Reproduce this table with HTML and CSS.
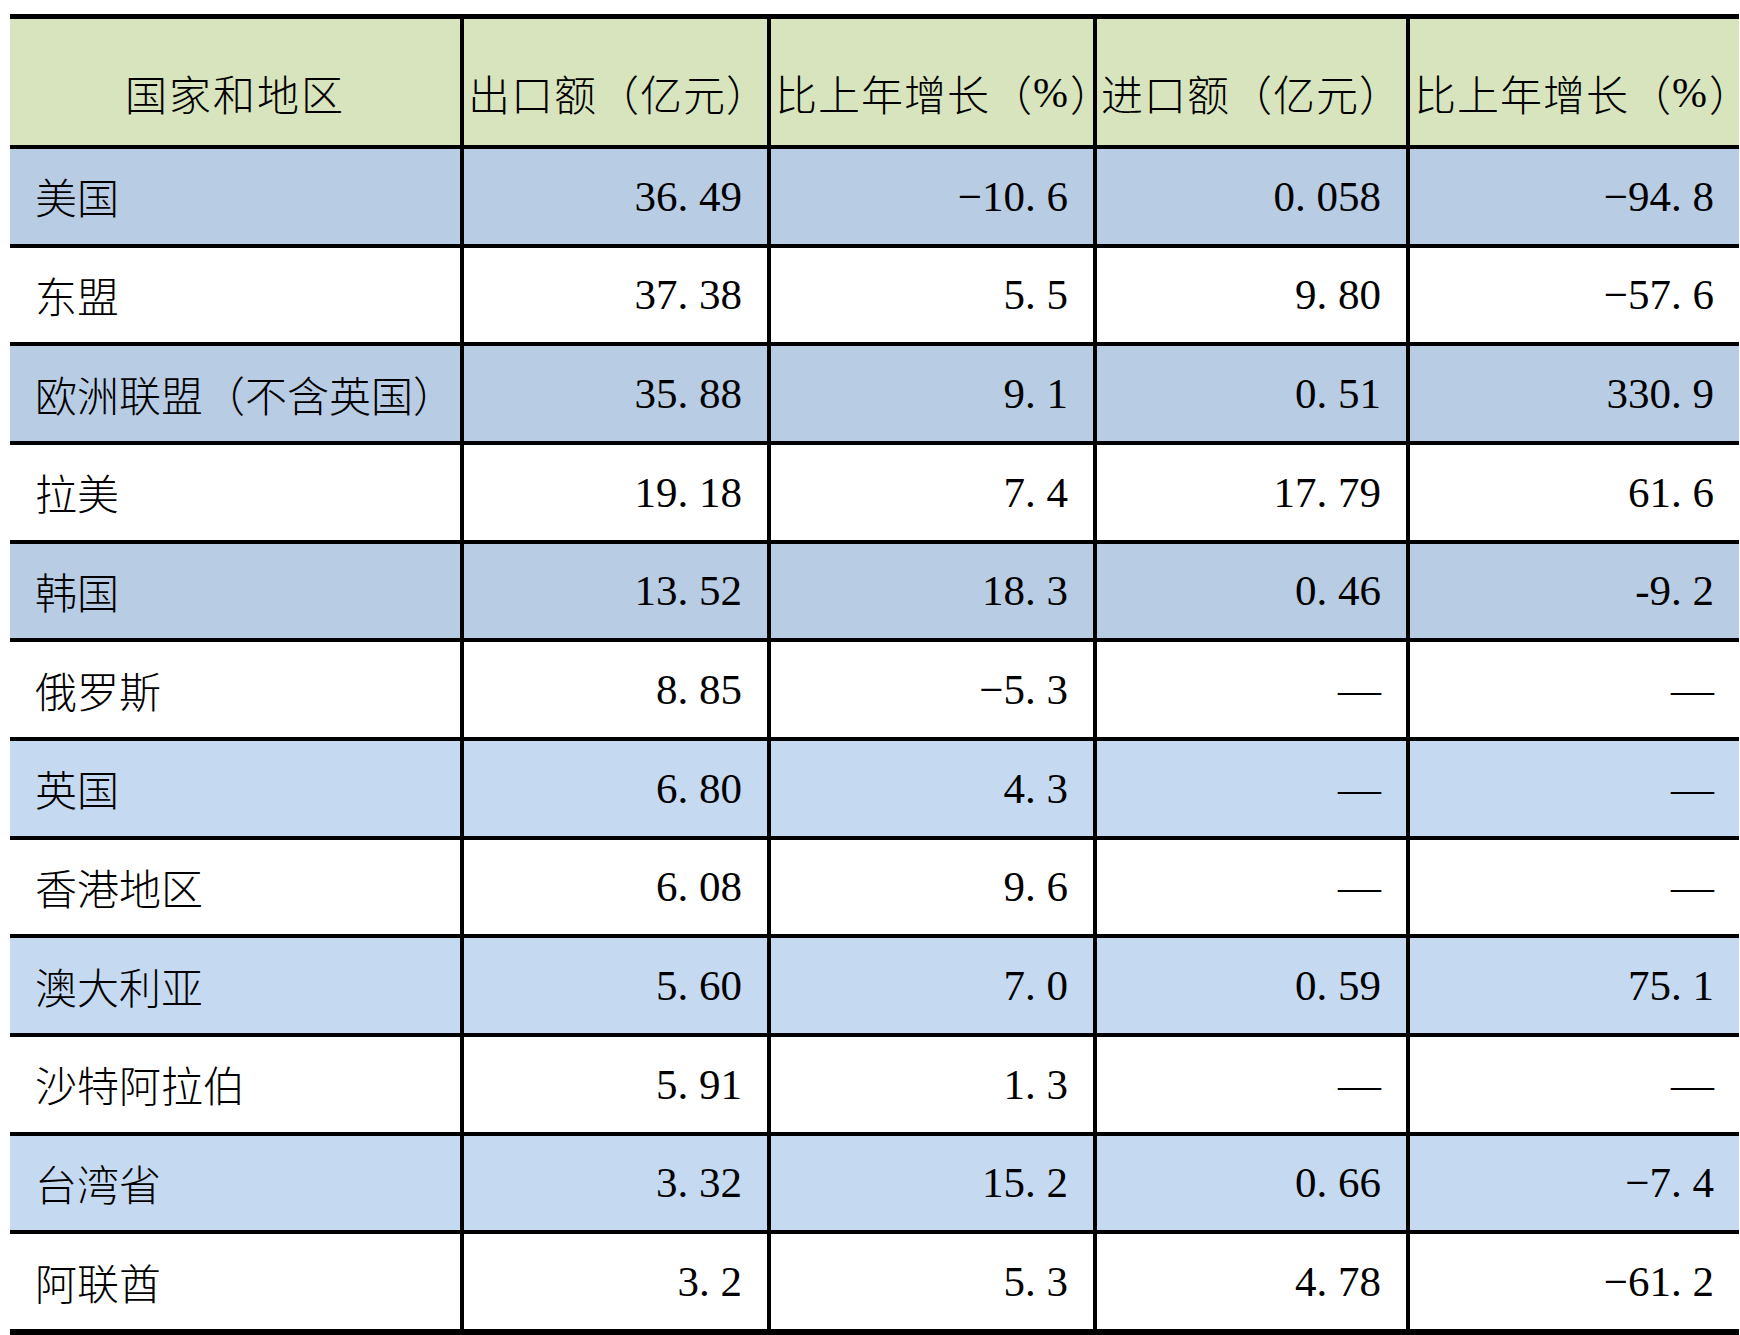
FILE: index.html
```html
<!DOCTYPE html>
<html lang="zh-CN">
<head>
<meta charset="utf-8">
<title>国家和地区进出口</title>
<link rel="stylesheet" href="styles.css">
</head>
<body>
<div class="sheet" role="table">
  <div class="row head" role="row">
    <div class="cell name" role="columnheader">国家和地区</div>
    <div class="cell" role="columnheader">出口额（亿元<span class="cp">）</span></div>
    <div class="cell" role="columnheader">比上年增长（<span class="pct">%</span><span class="cp">）</span></div>
    <div class="cell" role="columnheader">进口额（亿元<span class="cp">）</span></div>
    <div class="cell" role="columnheader">比上年增长（<span class="pct">%</span><span class="cp">）</span></div>
  </div>
  <div class="row dark" role="row">
    <div class="cell name">美国</div>
    <div class="cell num">36<span class="dot">.</span>49</div>
    <div class="cell num">−10<span class="dot">.</span>6</div>
    <div class="cell num">0<span class="dot">.</span>058</div>
    <div class="cell num">−94<span class="dot">.</span>8</div>
  </div>
  <div class="row" role="row">
    <div class="cell name">东盟</div>
    <div class="cell num">37<span class="dot">.</span>38</div>
    <div class="cell num">5<span class="dot">.</span>5</div>
    <div class="cell num">9<span class="dot">.</span>80</div>
    <div class="cell num">−57<span class="dot">.</span>6</div>
  </div>
  <div class="row dark" role="row">
    <div class="cell name">欧洲联盟（不含英国）</div>
    <div class="cell num">35<span class="dot">.</span>88</div>
    <div class="cell num">9<span class="dot">.</span>1</div>
    <div class="cell num">0<span class="dot">.</span>51</div>
    <div class="cell num">330<span class="dot">.</span>9</div>
  </div>
  <div class="row" role="row">
    <div class="cell name">拉美</div>
    <div class="cell num">19<span class="dot">.</span>18</div>
    <div class="cell num">7<span class="dot">.</span>4</div>
    <div class="cell num">17<span class="dot">.</span>79</div>
    <div class="cell num">61<span class="dot">.</span>6</div>
  </div>
  <div class="row dark" role="row">
    <div class="cell name">韩国</div>
    <div class="cell num">13<span class="dot">.</span>52</div>
    <div class="cell num">18<span class="dot">.</span>3</div>
    <div class="cell num">0<span class="dot">.</span>46</div>
    <div class="cell num">-9<span class="dot">.</span>2</div>
  </div>
  <div class="row" role="row">
    <div class="cell name">俄罗斯</div>
    <div class="cell num">8<span class="dot">.</span>85</div>
    <div class="cell num">−5<span class="dot">.</span>3</div>
    <div class="cell num">—</div>
    <div class="cell num">—</div>
  </div>
  <div class="row light" role="row">
    <div class="cell name">英国</div>
    <div class="cell num">6<span class="dot">.</span>80</div>
    <div class="cell num">4<span class="dot">.</span>3</div>
    <div class="cell num">—</div>
    <div class="cell num">—</div>
  </div>
  <div class="row" role="row">
    <div class="cell name">香港地区</div>
    <div class="cell num">6<span class="dot">.</span>08</div>
    <div class="cell num">9<span class="dot">.</span>6</div>
    <div class="cell num">—</div>
    <div class="cell num">—</div>
  </div>
  <div class="row light" role="row">
    <div class="cell name">澳大利亚</div>
    <div class="cell num">5<span class="dot">.</span>60</div>
    <div class="cell num">7<span class="dot">.</span>0</div>
    <div class="cell num">0<span class="dot">.</span>59</div>
    <div class="cell num">75<span class="dot">.</span>1</div>
  </div>
  <div class="row" role="row">
    <div class="cell name">沙特阿拉伯</div>
    <div class="cell num">5<span class="dot">.</span>91</div>
    <div class="cell num">1<span class="dot">.</span>3</div>
    <div class="cell num">—</div>
    <div class="cell num">—</div>
  </div>
  <div class="row light" role="row">
    <div class="cell name">台湾省</div>
    <div class="cell num">3<span class="dot">.</span>32</div>
    <div class="cell num">15<span class="dot">.</span>2</div>
    <div class="cell num">0<span class="dot">.</span>66</div>
    <div class="cell num">−7<span class="dot">.</span>4</div>
  </div>
  <div class="row" role="row">
    <div class="cell name">阿联酋</div>
    <div class="cell num">3<span class="dot">.</span>2</div>
    <div class="cell num">5<span class="dot">.</span>3</div>
    <div class="cell num">4<span class="dot">.</span>78</div>
    <div class="cell num">−61<span class="dot">.</span>2</div>
  </div>
</div>
</body>
</html>
```

FILE: styles.css
```css
html, body {
  margin: 0;
  padding: 0;
  background: #ffffff;
}

body {
  padding: 14px 0 0 10px;
  font-family: "Liberation Serif", "Noto Sans CJK SC", serif;
  color: #000000;
}

.sheet {
  display: grid;
  width: 1729px;
  grid-template-columns: 450px 303px 322px 309px 329px;
  grid-template-rows: 126px repeat(12, 94.67px);
  column-gap: 4px;
  row-gap: 4px;
  padding: 5px 0 6px 0;
  background: #000000;
}

.row {
  display: contents;
}

.cell {
  display: flex;
  align-items: center;
  background: #ffffff;
  font-size: 42px;
  line-height: 1;
  white-space: nowrap;
  overflow: hidden;
}

.head .cell {
  background: #d7e4bd;
  padding: 22px 0 0 4px;
  justify-content: flex-start;
  font-family: "Noto Sans CJK SC", serif;
  font-weight: 300;
  letter-spacing: 1px;
}

.head .cell.name {
  justify-content: center;
  padding-left: 0;
  letter-spacing: 2px;
}

.head .pct {
  font-family: "Liberation Serif", serif;
  letter-spacing: 2px;
}

.head .cp {
  letter-spacing: -20px;
}

.dark .cell {
  background: #b8cce4;
}

.light .cell {
  background: #c5d9f1;
}

.name {
  padding-left: 25px;
  font-family: "Noto Sans CJK SC", serif;
  font-weight: 300;
}

.num {
  justify-content: flex-end;
  padding-right: 25px;
  font-size: 43px;
}

.dot {
  margin-right: 0.25em;
}
```
